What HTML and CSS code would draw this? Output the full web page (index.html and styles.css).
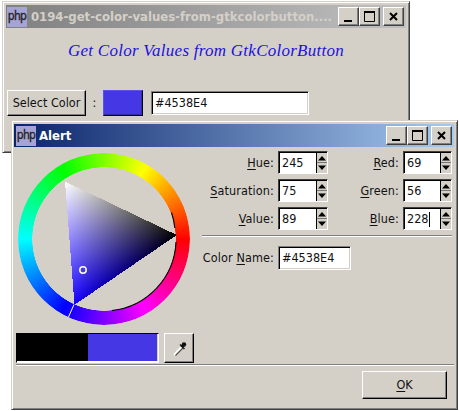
FILE: index.html
```
<!DOCTYPE html>
<html lang="en">
<head>
<meta charset="utf-8">
<title>Get Color Values from GtkColorButton</title>
<link rel="stylesheet" href="styles.css">
</head>
<body>
<section class="window main-window">
  <header class="titlebar inactive">
    <span class="app-icon">php</span>
    <span class="title">0194-get-color-values-from-gtkcolorbutton....</span>
    <span class="control"><svg viewBox="0 0 17 15"><path d="M4 12H12" stroke-width="2"/></svg></span>
    <span class="control"><svg viewBox="0 0 17 15"><path d="M3.500 3V12.500H13.500V3"/><path d="M3 3H14" stroke-width="2"/></svg></span>
    <span class="control close"><svg viewBox="0 0 17 15"><path d="M5 4L12 11M12 4L5 11" stroke-width="2"/></svg></span>
  </header>
  <h1>Get Color Values from GtkColorButton</h1>
  <div class="picker-row">
    <span class="button select"><span class="select-label">Select Color</span></span>
    <span class="colon">:</span>
    <span class="button color"></span>
    <span class="entry wide"><span class="hex">#4538E4</span></span>
  </div>
</section>

<section class="window dialog">
  <header class="titlebar active">
    <span class="app-icon">php</span>
    <span class="title">Alert</span>
    <span class="control"><svg viewBox="0 0 17 15"><path d="M4 12H12" stroke-width="2"/></svg></span>
    <span class="control"><svg viewBox="0 0 17 15"><path d="M3.500 3V12.500H13.500V3"/><path d="M3 3H14" stroke-width="2"/></svg></span>
    <span class="control close"><svg viewBox="0 0 17 15"><path d="M5 4L12 11M12 4L5 11" stroke-width="2"/></svg></span>
  </header>
  <div class="content">
    <div class="selector">
      <div class="wheel">
        <div class="ring"></div>
        <svg class="triangle" viewBox="18 153 172 172">
          <defs>
            <linearGradient id="white" gradientUnits="userSpaceOnUse" x1="125.5" y1="269.5" x2="65" y2="181.5"><stop stop-color="#000"/><stop offset="1" stop-color="#fff"/></linearGradient>
            <linearGradient id="hue" gradientUnits="userSpaceOnUse" x1="120.75" y1="208" x2="74.5" y2="304.5"><stop stop-color="#000"/><stop offset="1" stop-color="#1500ff"/></linearGradient>
          </defs>
          <path d="M171.5 212.5A72 72 0 0 1 174.8 228M176 242A72 72 0 0 1 112 310.5" fill="none" stroke="#000" stroke-width="1.1"/>
          <g class="mix" shape-rendering="crispEdges">
            <path d="M65 181.5L176.8 235L74.5 304.8Z" fill="url(#white)"/>
            <path class="add" d="M65 181.5L176.8 235L74.5 304.8Z" fill="url(#hue)"/>
          </g>
          <path d="M74 304.5L68.500 317" stroke="#fff"/>
          <circle cx="83" cy="270" r="3.2" fill="none" stroke="#fff" stroke-width="1.5"/>
        </svg>
      </div>
      <div class="samples">
        <div class="swatch"><span class="old"></span><span class="new"></span></div>
        <span class="button dropper"><svg viewBox="0 0 28 27"><path d="M9 20.500L16.500 12.500" stroke="#fff" stroke-width="2"/><path d="M10.500 21L18 13.500" stroke="#555" stroke-width="1.200"/><path d="M15 10L19.500 14.500" stroke="#222" stroke-width="1.500"/><path d="M16.500 12.500L19 10" stroke="#111" stroke-width="3"/><circle cx="19" cy="10" r="2.200" fill="#111"/></svg></span>
      </div>
    </div>
    <div class="values">
      <div class="fields">
        <label><u>H</u>ue:</label><span class="spin"><b>245</b><i><svg viewBox="0 0 10 20"><path d="M5 3L9 7.500H1ZM5 17L9 12.500H1Z"/><path class="split" d="M0 9.500H10"/></svg></i></span>
        <label><u>R</u>ed:</label><span class="spin"><b>69</b><i><svg viewBox="0 0 10 20"><path d="M5 3L9 7.500H1ZM5 17L9 12.500H1Z"/><path class="split" d="M0 9.500H10"/></svg></i></span>
        <label><u>S</u>aturation:</label><span class="spin"><b>75</b><i><svg viewBox="0 0 10 20"><path d="M5 3L9 7.500H1ZM5 17L9 12.500H1Z"/><path class="split" d="M0 9.500H10"/></svg></i></span>
        <label><u>G</u>reen:</label><span class="spin"><b>56</b><i><svg viewBox="0 0 10 20"><path d="M5 3L9 7.500H1ZM5 17L9 12.500H1Z"/><path class="split" d="M0 9.500H10"/></svg></i></span>
        <label><u>V</u>alue:</label><span class="spin"><b>89</b><i><svg viewBox="0 0 10 20"><path d="M5 3L9 7.500H1ZM5 17L9 12.500H1Z"/><path class="split" d="M0 9.500H10"/></svg></i></span>
        <label><u>B</u>lue:</label><span class="spin"><b class="focused">228</b><i><svg viewBox="0 0 10 20"><path d="M5 3L9 7.500H1ZM5 17L9 12.500H1Z"/><path class="split" d="M0 9.500H10"/></svg></i></span>
      </div>
      <div class="rule"></div>
      <div class="name-row"><label>Color <u>N</u>ame:</label><span class="entry name"><span class="hex">#4538E4</span></span></div>
    </div>
  </div>
  <div class="rule bottom-rule"></div>
  <footer><span class="button ok"><span><u>O</u>K</span></span></footer>
</section>
</body>
</html>
```
FILE: styles.css
```
* { box-sizing: border-box; }
body {
  margin: 0;
  width: 459px;
  height: 411px;
  overflow: hidden;
  position: relative;
  background: #fff;
  font: 12.5px/16px "DejaVu Sans Condensed", "DejaVu Sans", sans-serif;
  font-stretch: condensed;
  color: #111;
}
svg { display: block; width: 100%; height: 100%; }
u { text-decoration: underline; text-decoration-thickness: 1px; text-underline-offset: 2px; }

.window {
  position: absolute;
  background: #d4d0c8;
  border: 1px solid;
  border-color: #d4d0c8 #404040 #404040 #d4d0c8;
  box-shadow: inset 1px 1px #fff, inset -1px -1px #808080;
}
.main-window { left: 2px; top: 1px; width: 408px; height: 152px; padding: 3px; }
.dialog { left: 11px; top: 120px; width: 447px; height: 290px; padding: 3px 3px 3px 2px; }

.titlebar { display: flex; align-items: center; height: 23px; padding: 0 2px 0 1px; color: #fff; }
.inactive { background: linear-gradient(90deg, #808080, #c0c0c0); color: #d4d0c8; }
.active { background: linear-gradient(90deg, #0a246a, #a6caf0); }
.dialog .titlebar { padding-left: 2px; }
.app-icon {
  width: 20px;
  height: 20px;
  margin-right: 4px;
  background: #a5a4d5;
  color: #222;
  font: 12px/18px "DejaVu Sans Condensed", sans-serif;
  font-stretch: condensed;
  letter-spacing: -.7px;
  text-align: center;
  -webkit-text-stroke: .3px #222;
}
.dialog .app-icon { margin-right: 3px; }
.title { flex: 1; font-weight: bold; font-size: 13px; white-space: nowrap; }
.inactive .title { letter-spacing: -.02px; }
.control {
  width: 21px;
  height: 19px;
  padding: 1px;
  background: #d4d0c8;
  border: 1px solid;
  border-color: #fff #404040 #404040 #fff;
  box-shadow: inset -1px -1px #808080;
}
.control path { fill: none; stroke: #000; }
.close { margin-left: 3px; }

h1 {
  margin: 12px 0 0;
  padding-left: 62px;
  height: 50px;
  font: italic 17px/22px "Liberation Serif", serif;
  letter-spacing: .26px;
  color: #1c10e0;
  white-space: nowrap;
}
.picker-row { display: flex; align-items: center; padding-left: 1px; }
.button {
  display: flex;
  align-items: center;
  justify-content: center;
  background: #d4d0c8;
  border: 1px solid;
  border-color: #fff #000 #000 #fff;
  box-shadow: inset -1px -1px #808080;
}
.select { width: 79px; height: 26px; white-space: nowrap; }
.colon { width: 17px; text-align: center; }
.color { width: 40px; height: 26px; background: #4538e4; border-color: #5b51e8 #000 #000 #5b51e8; box-shadow: inset -1px -1px #332aa8; }
.entry {
  display: flex;
  align-items: center;
  height: 24px;
  padding-left: 3px;
  background: #fff;
  border: 1px solid;
  border-color: #808080 #fff #fff #808080;
  box-shadow: inset 1px 1px #000, inset -1px -1px #d4d0c8;
}
.wide { width: 158px; margin-left: 8px; }
.name { width: 73px; }

.content { display: flex; height: 217px; padding-left: 2px; }
.selector { width: 186px; padding-top: 6px; }
.wheel { display: grid; width: 172px; height: 172px; margin-left: 2px; }
.ring, .triangle { grid-area: 1 / 1; }
.triangle { z-index: 1; }
.ring {
  border-radius: 50%;
  background: conic-gradient(from 90deg, #f00, #f0f, #00f, #0ff, #0f0, #ff0, #f00);
  mask: radial-gradient(circle, transparent 71.5px, #000 72px);
}
.mix { isolation: isolate; }
.add { mix-blend-mode: plus-lighter; }
.samples { display: flex; gap: 5px; margin-top: 8px; }
.swatch { display: flex; width: 143px; height: 30px; border: 1px solid; border-color: #000 #fff #fff #000; box-shadow: inset 0 -1px #fff; padding: 0 1px 1px 0; }
.old { width: 71px; background: #000; }
.new { flex: 1; background: #4538e4; }
.dropper { width: 30px; height: 30px; }

.values { width: 250px; padding-top: 4px; }
.fields { display: grid; grid-template-columns: 72px 50px 67px 49px; column-gap: 4px; row-gap: 5px; align-items: center; }
label { text-align: right; white-space: nowrap; }
.fields label, .name-row label { letter-spacing: .12px; }
.spin {
  display: flex;
  height: 23px;
  background: #fff;
  border: 1px solid;
  border-color: #404040 #fff #fff #404040;
  box-shadow: inset 1px 1px #000;
  padding: 1px 0 0 1px;
}
.spin b { flex: 1; padding: 2px 0 0 2px; font-weight: normal; }
.spin i { width: 11px; background: #d4d0c8; border-left: 1px solid #000; }
.spin svg { height: 20px; }
.split { stroke: #777; }
.spin .focused { background: linear-gradient(#000, #000) 24px 3px / 1px 15px no-repeat; }
.rule { height: 2px; border-top: 1px solid #808080; border-bottom: 1px solid #fff; }
.values .rule { margin: 5px 0 0 0; }
.name-row { display: flex; align-items: center; gap: 4px; margin-top: 9px; }
.name-row label { width: 72px; }
.bottom-rule { margin-left: 2px; }
footer { display: flex; justify-content: flex-end; padding: 5px 7px 0 0; }
.ok { width: 85px; height: 28px; }
```
